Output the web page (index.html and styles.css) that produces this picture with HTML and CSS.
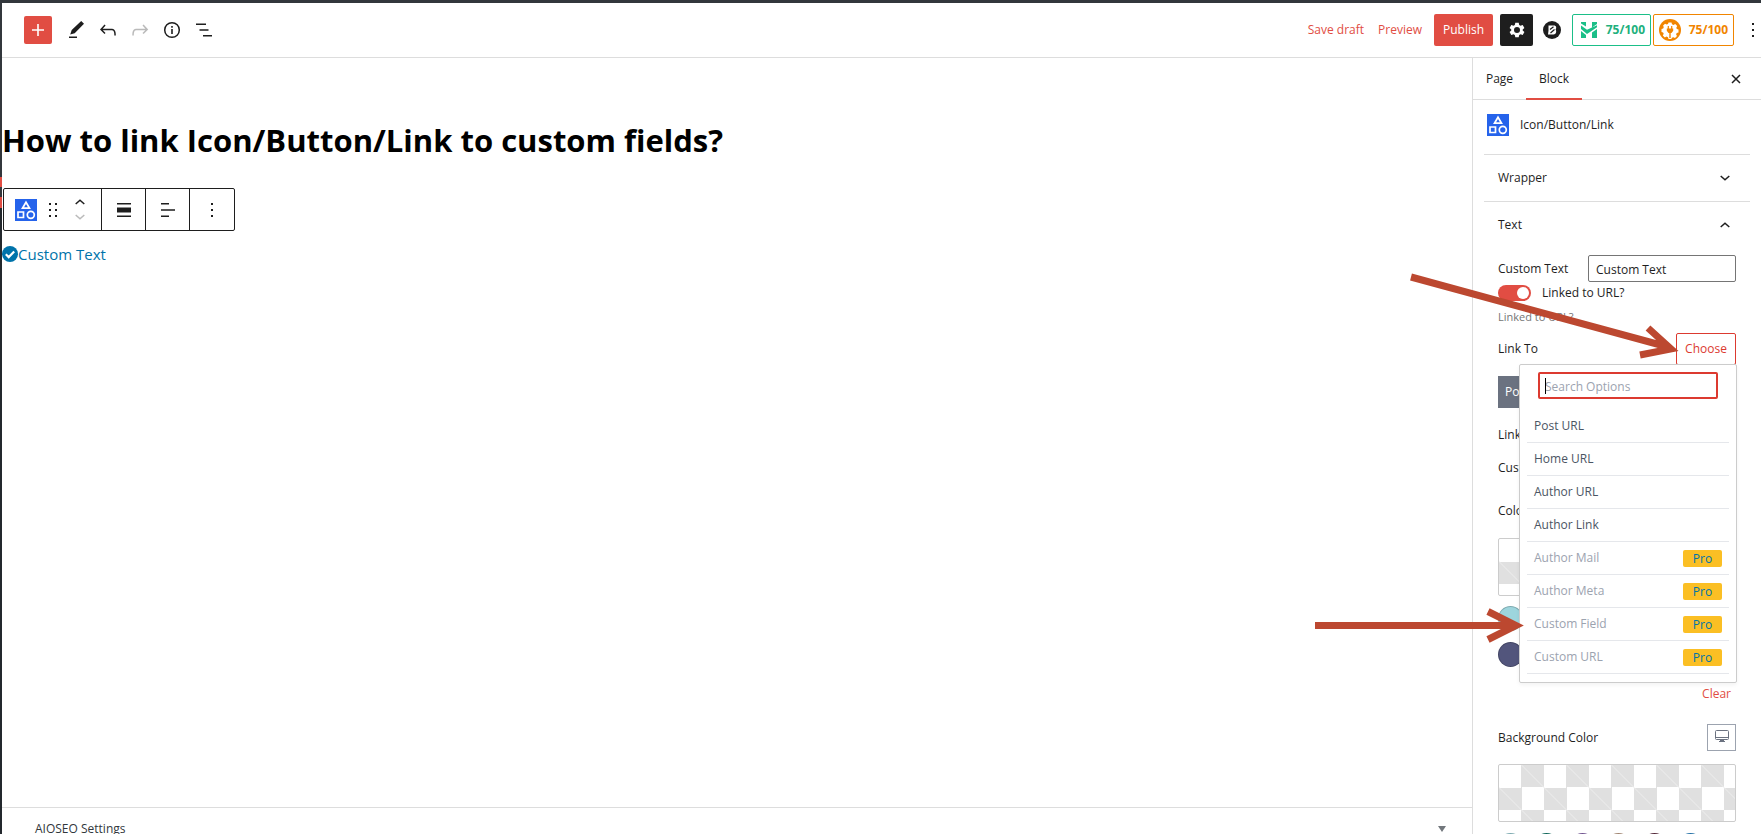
FILE: index.html
```html
<!DOCTYPE html>
<html lang="en">
<head>
<meta charset="utf-8">
<title>Edit Page</title>
<link rel="stylesheet" href="styles.css">
</head>
<body>
<div class="editor">
  <header class="header">
    <div class="tools">
      <button class="tool add" aria-label="Add block"><svg width="24" height="24" viewBox="0 0 24 24"><path d="M18 11.200h-5.200V6h-1.600v5.200H6v1.600h5.200V18h1.600v-5.200H18z" fill="#fff"/></svg></button>
      <button class="tool" aria-label="Tools"><svg width="24" height="24" viewBox="0 0 24 24"><path d="m20 5.800-2.800-2.800-9.500 9-1.500 4.500 4.500-1.200L20 5.800Zm-7 12.700H5V20h8v-1.500Z"/></svg></button>
      <button class="tool" aria-label="Undo"><svg width="24" height="24" viewBox="0 0 24 24"><path d="M18.300 11.700c-.6-.6-1.400-.9-2.300-.9H6.700l2.900-3.300-1.100-1-4.500 5L8.500 16l1-1-2.700-2.700H16c.5 0 .9.2 1.300.5 1 1 1 3.400 1 4.500v.3h1.500v-.2c0-1.500 0-4.300-1.500-5.700z"/></svg></button>
      <button class="tool faded" aria-label="Redo"><svg width="24" height="24" viewBox="0 0 24 24"><path d="M15.600 6.500l-1.100 1 2.900 3.300H8c-.9 0-1.700.3-2.300.9-1.400 1.500-1.400 4.200-1.400 5.600v.2h1.500v-.3c0-1.100 0-3.500 1-4.500.3-.3.700-.5 1.300-.5h9.200L14.500 15l1.100 1.100 4.600-4.600-4.600-5z"/></svg></button>
      <button class="tool" aria-label="Details"><svg width="24" height="24" viewBox="0 0 24 24"><circle cx="12" cy="12" r="7.300" fill="none" stroke="#1e1e1e" stroke-width="1.500"/><path d="M11.200 11h1.600v5h-1.600zM11.200 8h1.600v1.700h-1.600z"/></svg></button>
      <button class="tool" aria-label="List view"><svg width="24" height="24" viewBox="0 0 24 24"><path d="M4 5.500h10V7H4zM7.500 11.200h9v1.600h-9zM11 17h9v1.500h-9z"/></svg></button>
    </div>
    <div class="actions">
      <button class="link">Save draft</button>
      <button class="link">Preview</button>
      <button class="publish">Publish</button>
      <button class="gear" aria-label="Settings"><svg width="24" height="24" viewBox="0 0 24 24"><path fill="#fff" fill-rule="evenodd" d="M10.300 4.800h3.400l.5 2.200 1.300.7 2.200-.7 1.700 3-1.700 1.500v1l1.700 1.500-1.700 3-2.200-.7-1.300.7-.5 2.200h-3.400l-.5-2.200-1.300-.7-2.200.7-1.700-3 1.700-1.500v-1L4.600 10l1.700-3 2.200.7L9.800 7zM12 9a3 3 0 1 0 0 6 3 3 0 0 0 0-6z"/></svg></button>
      <button class="round" aria-label="Blocks"><svg width="18" height="18" viewBox="0 0 18 18"><circle cx="9" cy="9" r="9" fill="#1e1e1e"/><path d="M5.500 4.500H11c2.200 0 2.800 2.300 1.600 4 1.300 2 .4 5-2.100 5H5l.5-4z" fill="#fff"/><path d="M7 8.500l3.500-2.700M7.500 12l4-3.500" stroke="#1e1e1e" stroke-width="1.200" fill="none"/></svg></button>
      <div class="scores">
        <button class="score green"><svg width="16" height="16" viewBox="0 0 16 16"><path fill="#1bbf88" d="M0 0h5v4.500L0 1.500zM11 0h5v2l-5 3.500zM0 3.500l6 4.300L16 3.200v2L6 12 0 7zM0 9l5 4v3H0zM16 7v9h-5v-5.500z"/></svg><span>75/100</span></button>
        <button class="score orange"><svg width="22" height="22" viewBox="0 0 22 22"><circle cx="11" cy="11" r="11" fill="#f18500"/><path fill="#fff" d="M9.500 3.500h3l.5 1.800 1.500.6 1.700-.9 2 2-.9 1.700.5 1.300 1.700.6v2.800l-1.800.5-.6 1.500.9 1.700-2 2-1.700-.9-1.500.6-.4 1.200H9.500L9 18.200l-1.500-.6-1.700.9-2-2 .9-1.700-.6-1.400-1.600-.5v-2.800l1.700-.6.6-1.400L4 6.700l2-2 1.700.9L9 5z"/><path d="M9.300 7v3M12.700 7v3" stroke="#f18500" stroke-width="1.200"/><path d="M7.800 9.500h6.400v2.300L12.500 14h-.8v5h-1.400v-5h-.8l-1.700-2.200z" fill="#f18500"/></svg><span>75/100</span></button>
      </div>
      <button class="dots" aria-label="Options"><svg width="4" height="16" viewBox="0 0 4 16"><path d="M1 1h2v2H1zM1 7h2v2H1zM1 13h2v2H1z"/></svg></button>
    </div>
  </header>

  <div class="body">
    <main class="main">
      <div class="canvas">
        <h1 class="title">How to link Icon/Button/Link to custom fields?</h1>
        <div class="toolbar">
          <div class="group first">
            <button class="tb" aria-label="Icon/Button/Link"><svg class="brand" viewBox="0 0 22 22"><path fill="#2563eb" d="M0 0h22v22H0z"/><path d="m11 3.200 3.500 6h-7zM3 13h5.500v5.500H3z" fill="none" stroke="#fff" stroke-width="1.700"/><circle cx="15.800" cy="15.800" r="3.500" fill="none" stroke="#fff" stroke-width="1.700"/></svg></button>
            <button class="tb" aria-label="Drag"><svg width="8" height="14" viewBox="0 0 8 14"><path d="M0 0h2v2H0zM6 0h2v2H6zM0 6h2v2H0zM6 6h2v2H6zM0 12h2v2H0zM6 12h2v2H6z"/></svg></button>
            <div class="movers">
              <button class="tb" aria-label="Move up"><svg width="10" height="6" viewBox="0 0 10 6"><path class="stroke" d="m.7 5 4.300-3.800L9.300 5"/></svg></button>
              <button class="tb faded" aria-label="Move down"><svg width="10" height="6" viewBox="0 0 10 6"><path class="stroke" d="m.7 1 4.300 3.800L9.300 1"/></svg></button>
            </div>
          </div>
          <button class="group tb" aria-label="Align"><svg width="14" height="14" viewBox="0 0 14 14"><path d="M0 0h14v1.400H0zM0 4.500h14v5H0zM0 12.600h14V14H0z"/></svg></button>
          <button class="group tb" aria-label="Align text"><svg width="14" height="14" viewBox="0 0 14 14"><path d="M0 0h8v1.400H0zM0 6.300h14v1.400H0zM0 12.600h8V14H0z"/></svg></button>
          <button class="group last tb" aria-label="More"><svg width="2" height="14" viewBox="0 0 2 14"><path d="M0 0h2v2H0zM0 6h2v2H0zM0 12h2v2H0z"/></svg></button>
        </div>
        <a class="custom" href="#"><svg width="16" height="16" viewBox="0 0 16 16"><circle cx="8" cy="8" r="8" fill="#0073aa"/><path d="m3.800 8.300 2.900 2.800 5.500-5.600" fill="none" stroke="#fff" stroke-width="2.200"/></svg>Custom Text</a>
      </div>
      <button class="metabox"><span>AIOSEO Settings</span><svg width="8" height="6" viewBox="0 0 8 6"><path fill="#72777c" d="M0 0h8L4 6z"/></svg></button>
    </main>

    <aside class="sidebar">
      <div class="tabs">
        <button class="tab">Page</button>
        <button class="tab active">Block</button>
        <button class="close" aria-label="Close"><svg width="10" height="10" viewBox="0 0 10 10"><path class="stroke" d="m1 1 8 8M9 1 1 9"/></svg></button>
      </div>
      <div class="card"><svg class="brand" viewBox="0 0 22 22"><path fill="#2563eb" d="M0 0h22v22H0z"/><path d="m11 3.200 3.500 6h-7zM3 13h5.500v5.500H3z" fill="none" stroke="#fff" stroke-width="1.700"/><circle cx="15.800" cy="15.800" r="3.500" fill="none" stroke="#fff" stroke-width="1.700"/></svg><span>Icon/Button/Link</span></div>
      <button class="panel-head"><span>Wrapper</span><svg width="10" height="6" viewBox="0 0 10 6"><path class="stroke" d="m.7 1 4.300 3.800L9.300 1"/></svg></button>
      <button class="panel-head"><span>Text</span><svg width="10" height="6" viewBox="0 0 10 6"><path class="stroke" d="m.7 5 4.300-3.800L9.300 5"/></svg></button>
      <div class="panel">
        <div class="field"><label for="ct">Custom Text</label><input class="textbox" id="ct" type="text" value="Custom Text"></div>
        <div class="toggle-row"><input class="toggle" type="checkbox" id="lk" checked><label for="lk">Linked to URL?</label></div>
        <p class="help">Linked to URL?</p>
        <div class="link-row">
          <span>Link To</span><button class="choose">Choose</button>
          <div class="popover">
            <input class="search" type="text" placeholder="Search Options" aria-label="Search Options"><span class="caret"></span>
            <ul class="options">
              <li><button class="option">Post URL</button></li>
              <li><button class="option">Home URL</button></li>
              <li><button class="option">Author URL</button></li>
              <li><button class="option">Author Link</button></li>
              <li><button class="option locked">Author Mail<span class="pro">Pro</span></button></li>
              <li><button class="option locked">Author Meta<span class="pro">Pro</span></button></li>
              <li><button class="option locked">Custom Field<span class="pro">Pro</span></button></li>
              <li><button class="option locked">Custom URL<span class="pro">Pro</span></button></li>
            </ul>
          </div>
        </div>
        <button class="chip">Post</button>
        <div class="row">Link</div>
        <div class="row">Custom</div>
        <div class="row color-label">Color</div>
        <div class="checker"></div>
        <div class="swatches stacked">
          <button class="swatch aqua" aria-label="Aqua"></button>
          <button class="swatch navy" aria-label="Navy"></button>
        </div>
        <button class="clear">Clear</button>
        <div class="bg-row"><span>Background Color</span><button class="device" aria-label="Desktop"><svg width="14" height="13" viewBox="0 0 14 13"><path d="M1.500.5h11q1 0 1 1v7q0 1-1 1h-11q-1 0-1-1v-7q0-1 1-1zM.5 7.500h13" fill="none" stroke="#6b7280"/><path d="M5 10h4v1H5zM4 11h6v1H4z" fill="#6b7280"/></svg></button></div>
        <div class="checker"></div>
        <div class="swatches">
          <button class="swatch aqua" aria-label="Aqua"></button>
          <button class="swatch teal" aria-label="Teal"></button>
          <button class="swatch purple" aria-label="Purple"></button>
          <button class="swatch tan" aria-label="Tan"></button>
          <button class="swatch plum" aria-label="Plum"></button>
          <button class="swatch blue" aria-label="Blue"></button>
        </div>
      </div>
      <svg class="arrows" width="380" height="380" viewBox="1310 270 380 380"><path d="M1411 277 1668 347M1648 328 1671 349 1640 355M1315 625.500H1515M1488 611.500 1516 625.500 1488 639.500" fill="none" stroke="#bc4830" stroke-width="7"/></svg>
    </aside>
  </div>
</div>
</body>
</html>
```

FILE: styles.css
```css
* { box-sizing: border-box; }
html, body { height: 100%; }
body {
  margin: 0;
  overflow: hidden;
  background: #fff;
  color: #1e1e1e;
  font: 12px/16px "Open Sans", "Noto Sans", sans-serif;
}
button {
  margin: 0;
  padding: 0;
  border: 0;
  background: none;
  color: inherit;
  font: inherit;
  display: inline-flex;
  align-items: center;
  justify-content: center;
}
input { font: inherit; color: inherit; margin: 0; }
svg { display: block; flex: none; fill: #1e1e1e; }
.stroke { fill: none; stroke: #1e1e1e; stroke-width: 1.500; }
.brand { width: 22px; height: 22px; }
.faded { opacity: .3; }

.editor {
  height: 100vh;
  display: flex;
  flex-direction: column;
  border-top: 3px solid #32373c;
  padding-left: 2px;
  background: linear-gradient(#32373c 174px, #e14d43 0 184px, #32373c 0 194px, #e14d43 0 205px, #23282d 0) 0 0 / 2px 100% no-repeat;
}
.header {
  flex: none;
  height: 55px;
  display: flex;
  justify-content: space-between;
  align-items: center;
  padding: 0 6px 0 22px;
  border-bottom: 1px solid #ddd;
}
.tools { display: flex; gap: 4px; align-items: center; }
.tool { width: 28px; height: 28px; }
.add { background: #e14d43; border-radius: 2px; margin-right: 6px; }
.actions { display: flex; align-items: center; }
.link { color: #e14d43; margin-left: 14px; }
.publish { height: 32px; width: 59px; margin-left: 12px; background: #e14d43; color: #fff; border-radius: 2px; }
.gear { width: 33px; height: 32px; margin-left: 7px; background: #1e1e1e; border-radius: 2px; }
.round { margin: 0 11px 0 10px; }
.scores { display: flex; gap: 2px; }
.score {
  width: 79px;
  height: 32px;
  justify-content: space-between;
  padding: 0 5px 0 8px;
  border: 1px solid;
  border-radius: 2px;
  font-weight: 700;
}
.green { border-color: #1bbf88; color: #22b07d; }
.orange { width: 81px; padding-left: 5px; border-color: #f18500; color: #f18500; }
.dots { margin-left: 17px; }

.body { flex: 1; min-height: 0; display: flex; }
.main { flex: 1; min-width: 0; display: flex; flex-direction: column; }
.canvas { flex: 1; padding-top: 60px; }
.title { margin: 0 0 25px; font-size: 31px; line-height: 45px; font-weight: 700; color: #000; }
.toolbar {
  display: inline-flex;
  height: 43px;
  margin-left: 1px;
  border: 1px solid #1e1e1e;
  border-radius: 2px;
}
.group { width: 44px; border-left: 1px solid #1e1e1e; }
.last { width: 45px; }
.first { width: 97px; border-left: 0; display: flex; align-items: center; gap: 12px; padding-left: 11px; }
.movers { display: flex; flex-direction: column; gap: 9px; margin-left: 6px; }
.custom {
  display: flex;
  align-items: center;
  margin-top: 11px;
  font-size: 15px;
  line-height: 24px;
  color: #0073aa;
  text-decoration: none;
}
.metabox {
  flex: none;
  height: 27px;
  padding: 15px 26px 0 33px;
  border-top: 1px solid #ddd;
  justify-content: space-between;
  color: #32373c;
  line-height: 12px;
}

.sidebar { position: relative; flex: none; width: 289px; border-left: 1px solid #ddd; }
.tabs { display: flex; height: 42px; border-bottom: 1px solid #ddd; }
.tab { width: 53px; height: 42px; }
.active { width: 56px; box-shadow: inset 0 -2px #e14d43; }
.close { margin-left: auto; margin-right: 20px; }
.card { display: flex; align-items: center; gap: 11px; height: 54px; padding: 0 0 4px 14px; }
.panel-head {
  display: flex;
  width: calc(100% - 22px);
  height: 47px;
  margin-left: 11px;
  padding: 0 20px 0 14px;
  border-top: 1px solid #ddd;
  justify-content: space-between;
}
.panel { padding: 7px 25px 0; display: flex; flex-direction: column; }
.field { display: flex; justify-content: space-between; align-items: center; }
.textbox { width: 148px; height: 27px; padding: 2px 7px 0; border: 1px solid #757575; border-radius: 2px; }
.toggle-row { display: flex; align-items: center; gap: 11px; margin-top: 3px; }
.toggle {
  appearance: none;
  width: 33px;
  height: 16px;
  padding: 2px;
  border-radius: 8px;
  background: #e14d43;
}
.toggle::after {
  content: "";
  display: block;
  width: 12px;
  height: 12px;
  margin-left: auto;
  border-radius: 50%;
  background: #fff;
}
.help { margin: 8px 0; color: #757575; font-size: 11px; }
.link-row { position: relative; display: flex; justify-content: space-between; align-items: center; }
.choose { width: 60px; height: 32px; border: 1px solid #dc3a30; border-radius: 2px; color: #dc3a30; }
.popover {
  position: absolute;
  z-index: 1;
  top: 31px;
  right: -1px;
  width: 218px;
  padding: 7px 7px 8px;
  background: #fff;
  border: 1px solid #ccc;
  border-radius: 2px;
  box-shadow: 0 2px 4px #0000000d;
}
.search {
  display: block;
  width: 180px;
  height: 27px;
  margin: 0 11px 11px;
  padding: 2px 5px 0;
  border: 2px solid #dc3a30;
  border-radius: 2px;
}
.search::placeholder { color: #9ca3af; opacity: 1; }
.caret { position: absolute; left: 25px; top: 13px; width: 1px; height: 16px; background: #000; }
.options { margin: 0; padding: 0; list-style: none; }
.option {
  width: 100%;
  height: 33px;
  padding: 0 7px;
  justify-content: space-between;
  border-bottom: 1px solid #e5e7eb;
  color: #4b5563;
}
.locked { color: #9ca3af; }
.pro { width: 39px; background: #fbbf24; color: #0073aa; border-radius: 2px; line-height: 17px; }
.chip { align-self: flex-start; height: 32px; margin: 11px 0 19px; padding: 0 7px; background: #6b7280; color: #fff; }
.row { margin-bottom: 17px; }
.color-label { margin: 10px 0 19px; }
.checker {
  height: 58px;
  border: 1px solid #ccc;
  border-radius: 2px;
  background:
    linear-gradient(45deg, transparent 24%, #eee 25%, transparent 26% 74%, #eee 75%, transparent 76%) 0 0 / 45px 45px,
    repeating-conic-gradient(#e0e0e0 0 25%, #fff 0 50%) 0 0 / 45px 45px;
}
.swatches { display: flex; gap: 11px; margin-top: 11px; }
.stacked { flex-direction: column; margin-top: 10px; }
.swatch { width: 25px; height: 25px; border-radius: 50%; border: 1px solid #0003; }
.aqua { background: #9dd5dd; }
.navy { background: #52557c; }
.teal { background: #128070; }
.purple { background: #8e6bb5; }
.tan { background: #c9a58d; }
.plum { background: #673147; }
.blue { background: #2f8ed0; }
.clear { align-self: flex-end; margin: 19px 5px 22px 0; color: #e14d43; }
.bg-row { display: flex; justify-content: space-between; align-items: center; margin-bottom: 13px; }
.device { width: 29px; height: 27px; border: 1px solid #9ca3af; }
.device svg { margin-bottom: 2px; }
.arrows { position: absolute; z-index: 2; top: 212px; right: 71px; pointer-events: none; }
```
